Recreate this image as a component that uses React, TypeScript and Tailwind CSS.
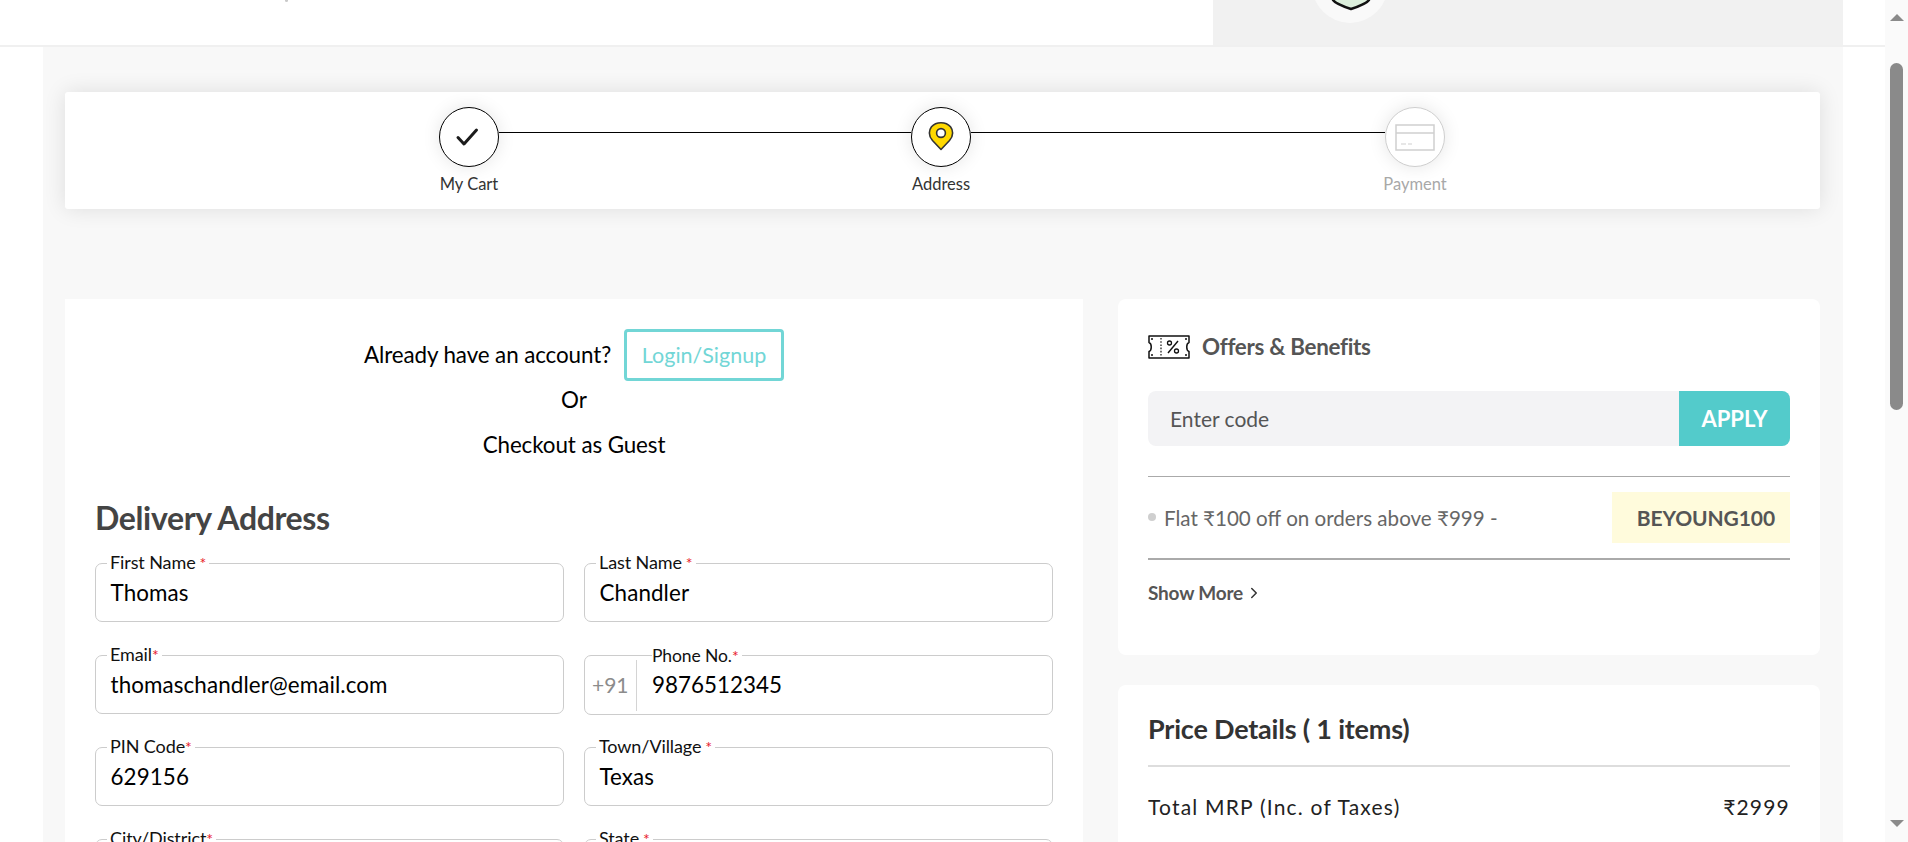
import React from 'react';
import { ChevronRight } from 'lucide-react';

const fieldRows = [
  [
    { label: 'First Name', star: ' *', value: 'Thomas' },
    { label: 'Last Name', star: ' *', value: 'Chandler' },
  ],
  [
    { label: 'Email', star: '*', value: 'thomaschandler@email.com' },
    { label: 'Phone No.', star: '*', value: '9876512345', prefix: '+91' },
  ],
  [
    { label: 'PIN Code', star: '*', value: '629156' },
    { label: 'Town/Village', star: ' *', value: 'Texas' },
  ],
  [
    { label: 'City/District', star: '*', value: '' },
    { label: 'State', star: ' *', value: '' },
  ],
];

const Field = ({ label, star, value, prefix }: { label: string; star: string; value: string; prefix?: string }) => {
  if (prefix) {
    return (
      <div className="relative flex h-[60px] w-full items-center rounded-[7px] border-[1.5px] border-[#cccccc] bg-white">
        <span className="w-[51px] pl-[7px] text-[21px] text-[#8c8c8c]">{prefix}</span>
        <div className="h-[51px] w-px bg-[#d4d4d4]" />
        <span className="pt-[1px] pl-[15px] text-[22.4px] leading-none text-black">{value}</span>
        <label className="absolute top-[-10px] left-[67px] bg-white pr-[3px] text-[17.5px] leading-[20px] tracking-[-0.1px] whitespace-pre text-[#111]">
          {label}
          <span className="text-[16px] text-[#e8202a]">{star}</span>
        </label>
      </div>
    );
  }
  return (
    <div className="relative flex h-[59px] w-full items-center rounded-[7px] border-[1.5px] border-[#cccccc] bg-white pt-[1px] pl-[14.5px]">
      <span className="text-[22.4px] leading-none tracking-[0.1px] text-black">{value}</span>
      <label className="absolute top-[-12px] left-[11px] bg-white px-[3px] text-[18px] leading-[20px] tracking-[-0.1px] whitespace-pre text-[#111]">
        {label}
        <span className="text-[16px] text-[#e8202a]">{star}</span>
      </label>
    </div>
  );
};

const Step = ({ label, muted, children }: { label: string; muted?: boolean; children: React.ReactNode }) => (
  <div className="flex w-[60px] shrink-0 flex-col items-center">
    <div
      className={`flex h-[60px] w-[60px] items-center justify-center rounded-full border bg-white shadow-[0_0_18px_rgba(0,0,0,0.1)] ${
        muted ? 'border-[#cfcfcf]' : 'border-black'
      }`}
    >
      {children}
    </div>
    <span className={`mt-[7px] text-[16.5px] leading-[20px] whitespace-nowrap ${muted ? 'text-[#a8a8a8]' : 'text-[#333]'}`}>
      {label}
    </span>
  </div>
);

const App: React.FC = () => {
  return (
    <div className="flex h-screen w-full overflow-hidden bg-white font-['Lato',sans-serif]">
      <div className="flex min-w-0 flex-1 flex-col">
        {/* Header */}
        <header className="relative flex h-[47px] shrink-0 justify-end overflow-hidden border-b-2 border-[#f0f0f0] bg-white pr-[42px]">
          <div className="absolute top-0 left-[285px] h-[2px] w-[3px] rounded-b-full bg-[#c9c9c9]" />
          <div className="relative h-[45px] w-[630px] overflow-hidden bg-[#f1f1f1]">
            <div className="absolute top-[-53px] left-[99px] h-[76px] w-[76px] rounded-full bg-[#f9f9f9]" />
            <svg className="absolute top-[-20px] left-[118px]" width="40" height="32" viewBox="0 0 40 32" fill="none">
              <path d="M2 2 H38 V20 C36 23 26 27 20 29 C14 27 4 23 2 20 Z" fill="#dcefdc" stroke="#111" strokeWidth="2.5" strokeLinejoin="round" />
            </svg>
          </div>
        </header>

        <div className="flex min-h-0 flex-1 pr-[42px] pl-[43px]">
          <main className="min-w-0 flex-1 bg-[#f8f8f8] pt-[45px] pr-[23px] pl-[22px]">
            {/* Stepper */}
            <section className="flex h-[117px] justify-center rounded-[3px] bg-white pt-[15px] pr-[1px] shadow-[0_0_22px_rgba(0,0,0,0.11)]">
              <Step label="My Cart">
                <svg width="24" height="20" viewBox="0 0 24 20" fill="none" className="mr-[4px]">
                  <path d="M3 10.5 L9 17 L21.5 3" stroke="#1c1c1c" strokeWidth="3" strokeLinecap="round" strokeLinejoin="round" />
                </svg>
              </Step>
              <div className="mt-[25px] h-px w-[412px] bg-black" />
              <Step label="Address">
                <svg width="26" height="30" viewBox="0 0 26 30" fill="none" className="mb-[2px]">
                  <path d="M13 28.5 L4.5 19.5 C0 14.5 1 9 3.5 5.8 C8 0.3 18 0.3 22.5 5.8 C25 9 26 14.5 21.5 19.5 Z" fill="#ffd900" stroke="#333" strokeWidth="1.6" strokeLinejoin="round" />
                  <circle cx="13" cy="12" r="4.4" fill="#fff" stroke="#333" strokeWidth="1.6" />
                </svg>
              </Step>
              <div className="mt-[25px] h-px w-[414px] bg-black" />
              <Step label="Payment" muted>
                <svg width="40" height="27" viewBox="0 0 40 27" fill="none">
                  <rect x="1" y="1" width="38" height="25" stroke="#cfcfcf" strokeWidth="1.5" />
                  <path d="M1 9 H39" stroke="#cfcfcf" strokeWidth="1.5" />
                  <path d="M6 20 H11 M13 20 H17" stroke="#cfcfcf" strokeWidth="1.2" />
                </svg>
              </Step>
            </section>

            <div className="mt-[90px] flex items-start gap-[35px]">
              {/* Address form */}
              <section className="w-[1018px] shrink-0 bg-white px-[30px] pt-[30px]">
                <div className="flex items-center justify-center gap-[13px]">
                  <span className="text-[22.4px] tracking-[-0.1px] text-black">Already have an account?</span>
                  <button className="h-[52px] w-[160px] rounded-[4px] border-[3px] border-[#72d6d6] text-[21.5px] text-[#72d6d6]">
                    Login/Signup
                  </button>
                </div>
                <p className="mt-[4px] text-center text-[22.4px] leading-[30px] text-black">Or</p>
                <p className="mt-[15px] text-center text-[22.4px] leading-[30px] tracking-[-0.1px] text-black">Checkout as Guest</p>
                <h2 className="mt-[38px] text-[32px] leading-[40px] font-bold tracking-[-0.35px] text-[#444]">Delivery Address</h2>
                <div className="mt-[25px] flex flex-col gap-[33px]">
                  {fieldRows.map((row) => (
                    <div key={row[0].label} className="grid h-[59px] grid-cols-[469px_469px] items-start gap-[20px]">
                      {row.map((f) => (
                        <Field key={f.label} {...f} />
                      ))}
                    </div>
                  ))}
                </div>
              </section>

              {/* Sidebar */}
              <aside className="flex min-w-0 flex-1 flex-col gap-[30px]">
                <section className="h-[356px] rounded-[8px] bg-white px-[30px] pt-[36px]">
                  <div className="flex items-center gap-[12px]">
                    <svg width="42" height="24" viewBox="0 0 42 24" fill="none">
                      <path d="M1 1 H41 V7.5 C38 8.5 38 15.5 41 16.5 V23 H1 V16.5 C4 15.5 4 8.5 1 7.5 Z" stroke="#111" strokeWidth="1.5" strokeLinejoin="round" />
                      <path d="M13 3 V21" stroke="#111" strokeWidth="1.2" strokeDasharray="1.6 1.6" />
                      <path d="M30 6 L20 18" stroke="#111" strokeWidth="1.4" />
                      <circle cx="21.5" cy="8" r="2" stroke="#111" strokeWidth="1.3" />
                      <circle cx="28.5" cy="16" r="2" stroke="#111" strokeWidth="1.3" />
                      <circle cx="4" cy="4" r="1" fill="#111" />
                      <circle cx="38" cy="4" r="1" fill="#111" />
                      <circle cx="4" cy="20" r="1" fill="#111" />
                      <circle cx="38" cy="20" r="1" fill="#111" />
                    </svg>
                    <h3 className="text-[22.4px] leading-[24px] font-bold tracking-[-0.3px] text-[#555]">Offers &amp; Benefits</h3>
                  </div>
                  <div className="mt-[32px] flex h-[55px] overflow-hidden rounded-[8px] bg-[#f3f3f5]">
                    <span className="flex flex-1 items-center pl-[22px] text-[21px] text-[#555]">Enter code</span>
                    <button className="w-[111px] bg-[#53cbcb] text-[22px] font-bold text-white">APPLY</button>
                  </div>
                  <div className="mt-[30px] flex h-[84px] items-center justify-between border-t border-b-2 border-t-[#aaaaaa] border-b-[#aaaaaa]">
                    <div className="flex items-center gap-[8px]">
                      <span className="h-[8px] w-[8px] rounded-full bg-[#cfcfcf]" />
                      <span className="pt-[2px] text-[20.6px] text-[#666]">Flat ₹100 off on orders above ₹999 -</span>
                    </div>
                    <span className="flex h-[51px] w-[178px] items-center justify-end bg-[#fffbdc] pr-[15px] text-[21px] font-bold tracking-[-0.1px] text-[#555]">
                      BEYOUNG100
                    </span>
                  </div>
                  <div className="mt-[21px] flex items-center gap-[2px] text-[19px] leading-[24px] font-bold tracking-[-0.2px] text-[#555]">
                    Show More
                    <ChevronRight size={18} strokeWidth={2} className="text-[#333]" />
                  </div>
                </section>

                <section className="rounded-[8px] bg-white px-[30px] pt-[26px] pb-[40px]">
                  <h3 className="text-[27px] leading-[36px] font-bold tracking-[-0.2px] text-[#333]">Price Details ( 1 items)</h3>
                  <div className="mt-[18px] h-[2px] bg-[#dddddd]" />
                  <div className="mt-[26px] flex justify-between text-[21px] leading-[28px] tracking-[1.2px] text-[#222]">
                    <span>Total MRP (Inc. of Taxes)</span>
                    <span>₹2999</span>
                  </div>
                </section>
              </aside>
            </div>
          </main>
        </div>
      </div>

      {/* Scrollbar */}
      <div className="flex w-[23px] shrink-0 flex-col items-center bg-[#fafafa]">
        <div className="mt-[14px] h-0 w-0 border-x-[7.5px] border-b-[7px] border-x-transparent border-b-[#8a8a8a]" />
        <div className="mt-[42px] h-[347px] w-[13px] rounded-full bg-[#8a8a8a]" />
        <div className="mt-auto mb-[15px] h-0 w-0 border-x-[7.5px] border-t-[7px] border-x-transparent border-t-[#8a8a8a]" />
      </div>
    </div>
  );
};

export default App;
